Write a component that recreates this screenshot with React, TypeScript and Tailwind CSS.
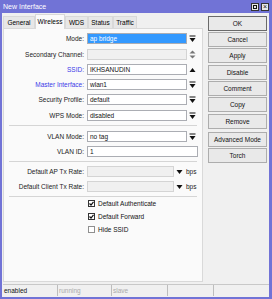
import React from "react";

const font = { fontFamily: '"Liberation Sans", Arial, sans-serif' };

function ArrowBarDown() {
  return (
    <svg width="7" height="8" viewBox="0 0 7 8">
      <rect x="0.5" y="0.5" width="6" height="1" fill="#111" />
      <path d="M0.5 3 L6.5 3 L3.5 7 Z" fill="#111" />
    </svg>
  );
}
function ArrowUpDown() {
  return (
    <svg width="7" height="9" viewBox="0 0 7 9">
      <path d="M0.5 3.5 L6.5 3.5 L3.5 0.5 Z" fill="#777" />
      <path d="M0.5 5.5 L6.5 5.5 L3.5 8.5 Z" fill="#777" />
    </svg>
  );
}
function ArrowUp() {
  return (
    <svg width="7" height="6" viewBox="0 0 7 6">
      <path d="M0.5 5 L6.5 5 L3.5 1 Z" fill="#111" />
    </svg>
  );
}
function ArrowDown() {
  return (
    <svg width="7" height="6" viewBox="0 0 7 6">
      <path d="M0.5 1 L6.5 1 L3.5 5 Z" fill="#111" />
    </svg>
  );
}

function Label({ children, blue }: { children: React.ReactNode; blue?: boolean }) {
  return (
    <div
      className={`w-[80px] shrink-0 text-right leading-[11px] ${
        blue ? "text-[#3b3be8]" : "text-[#222]"
      }`}
    >
      {children}
    </div>
  );
}

function Input({
  value,
  w,
  selected,
  disabled,
}: {
  value?: string;
  w: string;
  selected?: boolean;
  disabled?: boolean;
}) {
  return (
    <div
      className={`${w} h-[11px] border ${
        disabled ? "border-[#d4d4d4] bg-[#f0f0f0]" : "border-[#abadb3] bg-white"
      } flex items-center`}
    >
      {value !== undefined && (
        <span
          className={`h-[9px] leading-[9px] ${
            selected ? "bg-[#3399ff] text-white flex-1 pl-[2px]" : "text-[#111] pl-[2px]"
          }`}
        >
          {value}
        </span>
      )}
    </div>
  );
}

function Row({
  label,
  blue,
  children,
  className = "",
}: {
  label: string;
  blue?: boolean;
  children: React.ReactNode;
  className?: string;
}) {
  return (
    <div className={`flex items-center h-[11px] ${className}`}>
      <Label blue={blue}>{label}</Label>
      <div className="ml-[3px] flex items-center">{children}</div>
    </div>
  );
}

function ArrowBox({ children }: { children: React.ReactNode }) {
  return <div className="w-[11px] h-[11px] flex items-center justify-center">{children}</div>;
}

function Sep({ className = "" }: { className?: string }) {
  return <div className={`mx-[5px] h-[2px] border-t border-[#d5d5d5] border-b-white ${className}`} />;
}

function Check({ label, checked, className = "" }: { label: string; checked?: boolean; className?: string }) {
  return (
    <div className={`flex items-center h-[13px] pl-[84px] ${className}`}>
      <div
        className={`w-[7px] h-[7px] border ${
          checked ? "border-[#333]" : "border-[#8f8f8f]"
        } bg-white flex items-center justify-center`}
      >
        {checked && (
          <svg width="5" height="5" viewBox="0 0 5 5">
            <path d="M0.5 2.5 L2 4 L4.5 0.8" stroke="#111" strokeWidth="1.2" fill="none" />
          </svg>
        )}
      </div>
      <span className="ml-[3px] text-[#111]">{label}</span>
    </div>
  );
}

function Btn({ children, def, className = "" }: { children: React.ReactNode; def?: boolean; className?: string }) {
  return (
    <div
      className={`h-[15px] w-[59px] border ${
        def ? "border-[#6a6a6a]" : "border-[#adadad]"
      } bg-[#e9e9e9] flex items-center justify-center text-[#111] ${className}`}
    >
      {children}
    </div>
  );
}

function Tab({ children, w, active }: { children: React.ReactNode; w: string; active?: boolean }) {
  return (
    <div
      className={`${w} flex items-center justify-center border border-[#d9d9d9] ${
        active
          ? "h-[15px] bg-[#fafafa] border-b-0 relative z-10 -mb-[1px]"
          : "h-[12px] bg-[#e7e7e7] border-b-0"
      }`}
    >
      {children}
    </div>
  );
}

export default function App() {
  return (
    <div
      className="w-[272px] h-[299px] bg-[#7173d6] flex flex-col text-[6.5px] overflow-hidden"
      style={font}
    >
      {/* title bar */}
      <div className="h-[13px] flex items-center pl-[3px] pr-[3px] shrink-0">
        <span className="text-white text-[7px] leading-[13px]">New Interface</span>
        <div className="ml-auto flex gap-[2px]">
          <div className="w-[8px] h-[8px] bg-[#e8e8e8] border border-[#333] flex items-center justify-center">
            <div className="w-[4px] h-[4px] border border-[#111]" />
          </div>
          <div className="w-[8px] h-[8px] bg-[#e8e8e8] border border-[#333] flex items-center justify-center text-[7px] leading-none text-[#111]">
            ×
          </div>
        </div>
      </div>
      {/* body */}
      <div className="flex-1 ml-[2px] mr-[3px] mb-[2px] bg-[#f0f0f0] flex flex-col">
        <div className="flex flex-1">
          {/* left column */}
          <div className="pl-[1px] pt-[1px] flex flex-col w-[201px]">
            <div className="flex items-end h-[14px]">
              <Tab w="w-[32px]">General</Tab>
              <Tab w="w-[30px]" active>
                Wireless
              </Tab>
              <Tab w="w-[23px]">WDS</Tab>
              <Tab w="w-[25px]">Status</Tab>
              <Tab w="w-[24px]">Traffic</Tab>
            </div>
            <div className="h-[254px] border border-[#d9d9d9] bg-[#fafafa] pt-[4px]">
              <Row label="Mode:">
                <Input w="w-[100px]" value="ap bridge" selected />
                <ArrowBox>
                  <ArrowBarDown />
                </ArrowBox>
              </Row>
              <Row label="Secondary Channel:" className="mt-[5px]">
                <Input w="w-[100px]" disabled />
                <ArrowBox>
                  <ArrowUpDown />
                </ArrowBox>
              </Row>
              <Row label="SSID:" blue className="mt-[4px]">
                <Input w="w-[100px]" value="IKHSANUDIN" />
                <ArrowBox>
                  <ArrowUp />
                </ArrowBox>
              </Row>
              <Row label="Master Interface:" blue className="mt-[4px]">
                <Input w="w-[100px]" value="wlan1" />
                <ArrowBox>
                  <ArrowBarDown />
                </ArrowBox>
              </Row>
              <Row label="Security Profile:" className="mt-[4px]">
                <Input w="w-[100px]" value="default" />
                <ArrowBox>
                  <ArrowBarDown />
                </ArrowBox>
              </Row>
              <Row label="WPS Mode:" className="mt-[5px]">
                <Input w="w-[100px]" value="disabled" />
                <ArrowBox>
                  <ArrowBarDown />
                </ArrowBox>
              </Row>
              <Sep className="mt-[4px]" />
              <Row label="VLAN Mode:" className="mt-[4px]">
                <Input w="w-[100px]" value="no tag" />
                <ArrowBox>
                  <ArrowBarDown />
                </ArrowBox>
              </Row>
              <Row label="VLAN ID:" className="mt-[4px]">
                <Input w="w-[111px]" value="1" />
              </Row>
              <Sep className="mt-[4px]" />
              <Row label="Default AP Tx Rate:" className="mt-[3px]">
                <Input w="w-[87px]" disabled />
                <ArrowBox>
                  <ArrowDown />
                </ArrowBox>
                <span className="ml-[1px] text-[#222]">bps</span>
              </Row>
              <Row label="Default Client Tx Rate:" className="mt-[4px]">
                <Input w="w-[87px]" disabled />
                <ArrowBox>
                  <ArrowDown />
                </ArrowBox>
                <span className="ml-[1px] text-[#222]">bps</span>
              </Row>
              <Sep className="mt-[4px]" />
              <Check label="Default Authenticate" checked className="mt-[-1px]" />
              <Check label="Default Forward" checked />
              <Check label="Hide SSID" />
            </div>
          </div>
          {/* right column */}
          <div className="ml-[5px] pt-[3px] flex flex-col">
            <Btn def>OK</Btn>
            <Btn className="mt-[1px]">Cancel</Btn>
            <Btn className="mt-[1px]">Apply</Btn>
            <Btn className="mt-[2px]">Disable</Btn>
            <Btn className="mt-[1px]">Comment</Btn>
            <Btn className="mt-[1px]">Copy</Btn>
            <Btn className="mt-[2px]">Remove</Btn>
            <Btn className="mt-[3px]">Advanced Mode</Btn>
            <Btn className="mt-[1px]">Torch</Btn>
          </div>
        </div>
        {/* status bar */}
        <div className="h-[12px] mb-[1px] ml-[1px] flex border-t border-[#c8c8c8]">
          <div className="w-[54px] pl-[1px] leading-[11px] text-[#111]">enabled</div>
          <div className="w-[54px] pl-[1px] leading-[11px] text-[#aaa] border-l border-[#bdbdbd]">running</div>
          <div className="w-[56px] pl-[1px] leading-[11px] text-[#aaa] border-l border-[#bdbdbd]">slave</div>
          <div className="w-[46px] border-l border-[#bdbdbd]" />
          <div className="w-[55px] border-l border-[#bdbdbd]" />
        </div>
      </div>
    </div>
  );
}
